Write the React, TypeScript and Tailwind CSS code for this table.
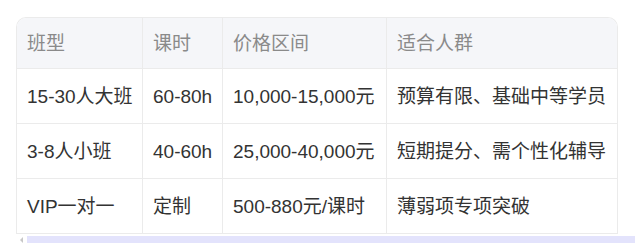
import React from "react";

const headers = ["班型", "课时", "价格区间", "适合人群"];
const rows = [
  ["15-30人大班", "60-80h", "10,000-15,000元", "预算有限、基础中等学员"],
  ["3-8人小班", "40-60h", "25,000-40,000元", "短期提分、需个性化辅导"],
  ["VIP一对一", "定制", "500-880元/课时", "薄弱项专项突破"],
];

export default function App() {
  return (
    <div
      className="w-[635px] h-[245px] bg-white overflow-hidden pt-[17px] pl-[16px]"
      style={{ fontFamily: '"Liberation Sans", "Noto Sans CJK SC", sans-serif' }}
    >
      <div className="w-[602px] border-t border-l border-r border-[#ebebeb] rounded-t-[10px] overflow-hidden">
        <div className="grid grid-cols-[126px_80px_164px_230px] text-[19px] leading-none">
          {headers.map((h, i) => (
            <div
              key={h}
              className={`h-[51px] flex items-center pl-[10px] bg-[#f5f6f9] text-[#8a8a8a] border-b border-[#ebebeb] whitespace-nowrap ${
                i < 3 ? "border-r" : ""
              }`}
            >
              {h}
            </div>
          ))}
          {rows.map((r, ri) =>
            r.map((c, i) => (
              <div
                key={`${ri}-${i}`}
                className={`h-[55px] flex items-center pl-[10px] bg-white text-[#333333] border-b border-[#ebebeb] whitespace-nowrap ${
                  i < 3 ? "border-r" : ""
                }`}
              >
                {c}
              </div>
            ))
          )}
        </div>
      </div>
      <div className="mt-[2px] flex items-center h-[7px]">
        <div className="w-[11px] flex justify-center">
          <div className="w-0 h-0 border-y-[3px] border-y-transparent border-r-[3px] border-r-[#c8c8c8]" />
        </div>
        <div className="flex-1 h-[7px] bg-[#e3e3fc]" />
      </div>
    </div>
  );
}
